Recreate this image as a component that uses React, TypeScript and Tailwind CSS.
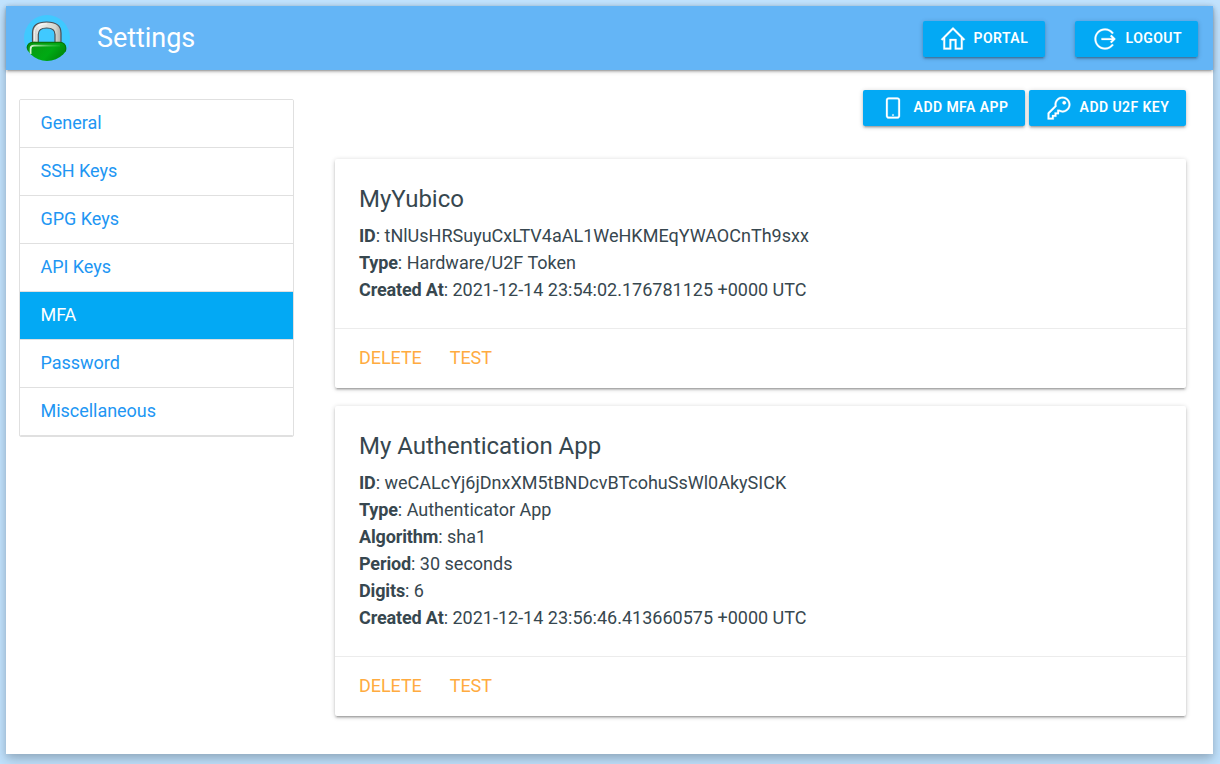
import type { ReactNode } from "react";
import { LiaHomeSolid, LiaKeySolid, LiaMobileSolid, LiaSignOutAltSolid } from "react-icons/lia";

const navItems = ["General", "SSH Keys", "GPG Keys", "API Keys", "MFA", "Password", "Miscellaneous"];

const tokens = [
  {
    name: "MyYubico",
    fields: [
      ["ID", "tNlUsHRSuyuCxLTV4aAL1WeHKMEqYWAOCnTh9sxx"],
      ["Type", "Hardware/U2F Token"],
      ["Created At", "2021-12-14 23:54:02.176781125 +0000 UTC"],
    ],
  },
  {
    name: "My Authentication App",
    fields: [
      ["ID", "weCALcYj6jDnxXM5tBNDcvBTcohuSsWl0AkySICK"],
      ["Type", "Authenticator App"],
      ["Algorithm", "sha1"],
      ["Period", "30 seconds"],
      ["Digits", "6"],
      ["Created At", "2021-12-14 23:56:46.413660575 +0000 UTC"],
    ],
  },
];

function Logo() {
  return (
    <svg width="46" height="46" viewBox="0 0 46 46" aria-hidden="true">
      <defs>
        <clipPath id="disc"><circle cx="23" cy="23" r="23" /></clipPath>
        <linearGradient id="steel" x1="0" x2="1" y1="0" y2="0">
          <stop offset="0" stopColor="#c4c4c0" />
          <stop offset=".25" stopColor="#eeeeec" />
          <stop offset=".8" stopColor="#d3d7cf" />
          <stop offset="1" stopColor="#aaaaa6" />
        </linearGradient>
        <linearGradient id="body" x1="0" x2="1" y1="0" y2=".6">
          <stop offset="0" stopColor="#0a960f" />
          <stop offset=".6" stopColor="#00aa14" />
          <stop offset="1" stopColor="#008008" />
        </linearGradient>
        <linearGradient id="shine" x1="0" x2="1" y1="0" y2="0">
          <stop offset="0" stopColor="#d5f5d5" />
          <stop offset="1" stopColor="#4cc455" stopOpacity=".2" />
        </linearGradient>
      </defs>
      <g clipPath="url(#disc)">
        <rect width="46" height="46" fill="#40c9ff" />
        <path d="M8.5 29V18C8.5 10.5 13 7 22.7 7S37 10.5 37 18V29H31V19.5C31 15 28.5 13 22.7 13S14.3 15 14.3 19.5V29Z" fill="url(#steel)" stroke="#4b5054" strokeWidth="1.2" />
        <path d="M10.3 26V18.5C10.3 12 14 8.8 22.7 8.8" fill="none" stroke="#fff" strokeWidth="1" opacity=".8" />
        <rect x="3.2" y="27.3" width="38.5" height="25" rx="5.5" fill="url(#body)" stroke="#087508" strokeWidth="1.3" />
        <path d="M6.6 39V34Q6.6 30.7 10 30.7H36" fill="none" stroke="url(#shine)" strokeWidth="1.8" />
      </g>
    </svg>
  );
}

function Button({ icon, children, className }: { icon: ReactNode; children: ReactNode; className: string }) {
  return (
    <button
      className={`flex h-9 items-center rounded-[2px] bg-[#03a9f4] pl-4 text-[14px] leading-9 font-semibold tracking-[0.44px] whitespace-nowrap text-white uppercase shadow-[0_2px_2px_0_rgba(0,0,0,0.14),0_3px_1px_-2px_rgba(0,0,0,0.12),0_1px_5px_0_rgba(0,0,0,0.2)] ${className}`}
    >
      {icon}
      <span className="-mt-[2px] ml-[6.6px]">{children}</span>
    </button>
  );
}

const iconClass = "stroke-white stroke-[0.3px]";

export default function App() {
  return (
    <div className="h-[764px] overflow-hidden bg-[#c1e2fd] pt-1.5 pr-[7px] pl-1.5 font-['Roboto',sans-serif] text-[18px] leading-[27px] text-[#37474f]">
      <div className="h-[748px] bg-white shadow-[0_6px_12px_0_rgba(0,0,0,0.2),0_2px_6px_0_rgba(0,0,0,0.08)]">
        <header className="flex h-16 items-start bg-[#64b5f6] pr-[15px] pl-[18px] shadow-[0_2px_2px_0_rgba(0,0,0,0.14),0_3px_1px_-2px_rgba(0,0,0,0.12),0_1px_5px_0_rgba(0,0,0,0.2)]">
          <div className="mt-[9px]"><Logo /></div>
          <h1 className="ml-[27px] text-[27px] leading-[65px] tracking-[-0.05px] text-white">Settings</h1>
          <div className="mt-[15px] ml-auto flex gap-[30px]">
            <Button className="w-[122px]" icon={<LiaHomeSolid size={28} className={iconClass} />}>Portal</Button>
            <Button className="w-[123px]" icon={<LiaSignOutAltSolid size={28} className={iconClass} />}>Logout</Button>
          </div>
        </header>
        <div className="flex">
          <nav className="mt-[29px] ml-[13px] w-[275px] self-start overflow-hidden rounded-[2px] border border-[#e0e0e0] text-[#2196f3]">
            {navItems.map((item) => (
              <a
                key={item}
                href="#"
                className={`block border-b border-[#e0e0e0] pt-[9px] pr-5 pb-[11px] pl-[20.5px] tracking-[-0.03px] ${item === "MFA" ? "bg-[#03a9f4] text-white" : "bg-white"}`}
              >
                {item}
              </a>
            ))}
          </nav>
          <main className="mt-5 ml-[41px] w-[851px]">
            <div className="flex justify-end gap-1">
              <Button className="w-[162px]" icon={<LiaMobileSolid size={28} className={iconClass} />}>Add MFA App</Button>
              <Button className="w-[157px]" icon={<LiaKeySolid size={28} className={iconClass} />}>Add U2F Key</Button>
            </div>
            <div className="mt-[33px] flex flex-col gap-[18px]">
              {tokens.map((token) => (
                <section
                  key={token.name}
                  className="rounded-[2px] bg-white shadow-[0_2px_2px_0_rgba(0,0,0,0.14),0_3px_1px_-2px_rgba(0,0,0,0.12),0_1px_5px_0_rgba(0,0,0,0.2)]"
                >
                  <div className="p-6 pb-[25px]">
                    <h2 className="mb-[7px] text-[24px] leading-8 tracking-[-0.02px]">{token.name}</h2>
                    {token.fields.map(([label, value]) => (
                      <p key={label}><b className="font-bold tracking-[-0.14px]">{label}</b>: {value}</p>
                    ))}
                  </div>
                  <div className="flex gap-7 border-t border-[rgba(160,160,160,0.2)] px-6 pt-[15px] pb-[17px] tracking-[-0.06px] text-[#ffab40] uppercase">
                    <a href="#">Delete</a>
                    <a href="#">Test</a>
                  </div>
                </section>
              ))}
            </div>
          </main>
        </div>
      </div>
    </div>
  );
}
